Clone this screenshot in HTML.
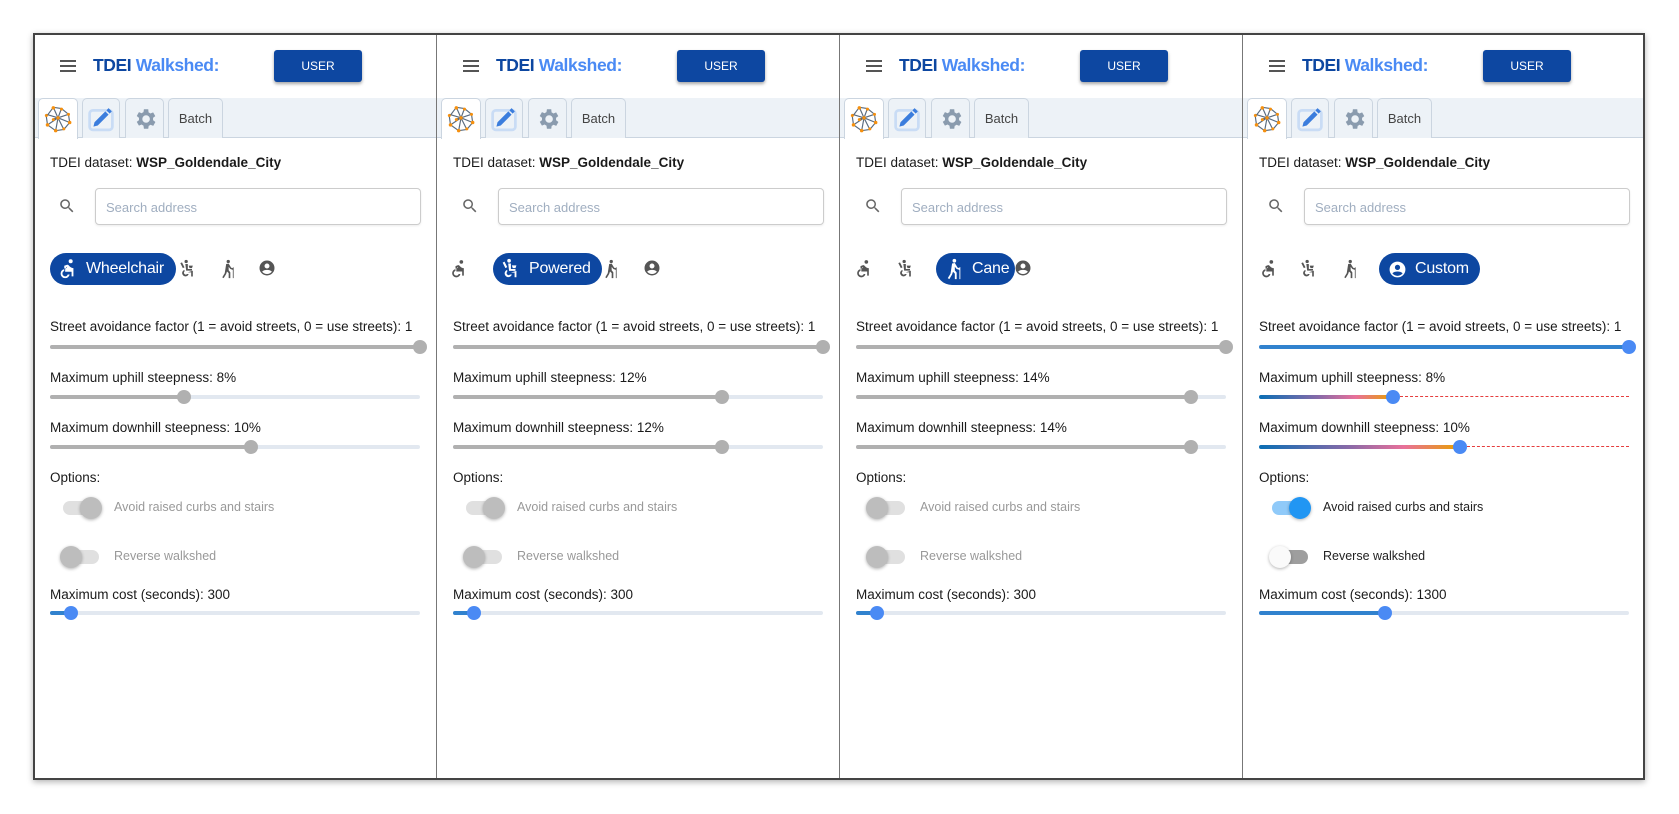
<!DOCTYPE html>
<html><head><meta charset="utf-8"><style>
*{box-sizing:border-box;margin:0;padding:0}
body{width:1679px;height:814px;background:#fff;font-family:"Liberation Sans",sans-serif;position:relative;overflow:hidden;color:#1a1a1a}
.frame{position:absolute;left:33px;top:33px;width:1612px;height:747px;border:2px solid #444;box-shadow:0 2px 6px rgba(0,0,0,.3);z-index:5;pointer-events:none}
.p{position:absolute;top:0;width:403px;height:780px;overflow:hidden}
.div{position:absolute;top:33px;width:1px;height:747px;background:#777;z-index:4}
.a{position:absolute}
.ham{left:27px;top:60px;width:16px;height:12px;border-top:2px solid #555;border-bottom:2px solid #555}
.ham:after{content:"";position:absolute;left:0;top:3px;width:16px;height:2px;background:#555}
.title{left:60px;top:55px;font-size:17.5px;font-weight:bold;width:155px;overflow:hidden;white-space:nowrap;letter-spacing:-.4px}
.title b{color:#0d47a1}.title span{color:#4a8af4;font-weight:bold}
.user{left:241px;top:50px;width:88px;height:32px;background:#0d47a1;color:#fff;font-size:12px;text-align:center;line-height:33px;border-radius:3px;box-shadow:0 2px 3px rgba(0,0,0,.35)}
.tabbar{left:0;top:98px;width:403px;height:40px;background:#edf2f7;border-bottom:1px solid #cbd5e0}
.tab{position:absolute;top:98px;height:40px;border:1px solid #cbd5e0;border-bottom:none;border-radius:5px 5px 0 0;background:#edf2f7;display:flex;align-items:center;justify-content:center;font-size:13px;color:#444}
.tab.on{background:#fff;height:41px}
.ds{left:17px;top:155px;font-size:13.5px}
.ds b{font-weight:bold}
.srch{left:62px;top:188px;width:326px;height:37px;border:1px solid #ccc;border-radius:4px;font-size:13px;color:#a0aec0;padding:11px 0 0 10px;box-shadow:0 1px 2px rgba(0,0,0,.08)}
.pill{position:absolute;top:253px;height:32px;background:#0d47a1;border-radius:16px;color:#fff;font-size:16px;display:flex;align-items:center;padding-left:6px;white-space:nowrap;letter-spacing:-.2px}
.pill svg{margin-right:8px;flex:none}
.ic{position:absolute;top:259px}
.lbl{position:absolute;left:17px;font-size:13.5px;white-space:nowrap}
.tr{position:absolute;left:17px;width:370px;height:4px;border-radius:2px;background:#e2e8f0}
.fill{position:absolute;left:0;top:0;height:4px;border-radius:2px;background:#b0b0b0}
.th{position:absolute;top:-5px;width:14px;height:14px;border-radius:50%;background:#b0b0b0;margin-left:-7px}
.blue .fill{background:#3182ce}.blue .th{background:#4a8af4}
.grad{background:linear-gradient(90deg,#0a6eb4,#8a6aa8 45%,#e8709a 72%,#e8a000)!important}
.dash{position:absolute;top:1px;height:0;border-top:1.5px dashed #e53e3e}
.tg{position:absolute;left:30px;width:36px;height:14px;border-radius:7px;background:#e0e0e0}
.kn{position:absolute;top:-4px;width:22px;height:22px;border-radius:50%;background:#bdbdbd;box-shadow:0 1px 3px rgba(0,0,0,.3)}
.tl{position:absolute;left:81px;font-size:12.5px;color:#999}
</style></head><body>
<svg width="0" height="0" style="position:absolute">
<defs>
<symbol id="wc" viewBox="0 0 24 24"><circle cx="16" cy="3.5" r="2.2"/><path d="M19 13v-2c-1.5 0-3-.6-4-1.7l-1.3-1.4c-.4-.4-1-.6-1.6-.5L9 8.5v3h2v-1.6l1.3-.3L10 12.4V15h7v5h2v-7zM10 20a3 3 0 0 1-3-3c0-1.3.8-2.4 2-2.8V12.1A5 5 0 1 0 14.9 18h-2.1A3 3 0 0 1 10 20z"/></symbol>
<symbol id="pw" viewBox="0 0 24 24"><circle cx="11" cy="3" r="2"/><path d="M6 4l3 6-2 1-3-6zM10 6h3v6h5v2h-7zM14 8h5l-1 3h-3zM19 14v7h-2v-5h-4zM9 13a4 4 0 1 0 5 5h-2a2 2 0 1 1-3-3z"/></symbol>
<symbol id="cn" viewBox="0 0 24 24"><circle cx="13.5" cy="3" r="2"/><path d="M11 6l3-.5 3 5 2 .5v-1h1v13h-1v-10l-3-1-2-2.5 0 4 2 2.5v7h-2v-6l-2-2-1 3-3 5-1.7-1 3-5z"/></symbol>
<symbol id="cu" viewBox="0 0 24 24"><path d="M12 2a10 10 0 1 0 0 20 10 10 0 1 0 0-20zm0 4a3.3 3.3 0 1 1 0 6.6A3.3 3.3 0 0 1 12 6zm0 14c-2.6 0-5-1.2-6.5-3.2 1.5-1.6 4-2.3 6.5-2.3s5 .7 6.5 2.3C17 18.8 14.6 20 12 20z"/></symbol>
<symbol id="net" viewBox="0 0 24 24"><g stroke="#5a6b7e" stroke-width="1" fill="none"><path d="M8 2l7 1 6 5 1 7-5 6-7 1-7-5-1-7zM8 2l4 9 3-8M12 11l9-3M12 11l10 4M12 11l5 10M12 11l-2 11M12 11l-9 6M12 11L2 8M8 12l4-1"/></g><g fill="#f5900f"><circle cx="8" cy="2.5" r="1.5"/><circle cx="15" cy="3.5" r="1.3"/><circle cx="21" cy="8" r="1.3"/><circle cx="22" cy="15" r="1.5"/><circle cx="17" cy="20.5" r="1.3"/><circle cx="10" cy="22" r="1.5"/><circle cx="3" cy="17" r="1.5"/><circle cx="2" cy="9" r="1.3"/><circle cx="12" cy="11" r="1.5"/><circle cx="8" cy="12.5" r="1.3"/></g></symbol>
<symbol id="pen" viewBox="0 0 24 24"><rect x="1.5" y="4" width="21" height="18" rx="3" fill="none" stroke="#c9dcf5" stroke-width="2.5"/><path d="M5 19l1-4 10-10 3 3-10 10z M17 4l2-2 3 3-2 2z" fill="#3b7ddd"/></symbol>
<symbol id="gear" viewBox="0 0 24 24"><path fill="#8a9bae" d="M19.4 13a7.6 7.6 0 0 0 0-2l2.1-1.6-2-3.5-2.5 1a7.5 7.5 0 0 0-1.7-1L15 3h-4l-.4 2.7c-.6.3-1.2.6-1.700 1l-2.5-1-2 3.5L6.5 11a7.6 7.6 0 0 0 0 2l-2.1 1.6 2 3.5 2.5-1c.5.4 1.1.8 1.7 1L11 21h4l.4-2.7c.6-.3 1.2-.6 1.7-1l2.5 1 2-3.5zM13 15.5a3.5 3.5 0 1 1 0-7 3.5 3.5 0 0 1 0 7z"/></symbol>
<symbol id="mag" viewBox="0 0 24 24"><path fill="#666" d="M15.5 14h-.8l-.3-.3A6.5 6.5 0 1 0 9.5 16a6.5 6.5 0 0 0 4.2-1.6l.3.3v.8l5 5 1.5-1.5zm-6 0a4.5 4.5 0 1 1 0-9 4.5 4.5 0 0 1 0 9z"/></symbol>
</defs></svg>
<div class="frame"></div>
<div class="div" style="left:436px"></div><div class="div" style="left:839px"></div><div class="div" style="left:1242px"></div>

<!-- PANEL 1 -->
<div class="p" style="left:33px">
<div class="a ham"></div><div class="a title"><b>TDEI</b> <span>Walkshed:</span></div><div class="a user">USER</div>
<div class="a tabbar"></div>
<div class="tab on" style="left:5px;width:40px"><svg width="28" height="28"><use href="#net"/></svg></div>
<div class="tab" style="left:49px;width:38px"><svg width="28" height="26"><use href="#pen"/></svg></div>
<div class="tab" style="left:92px;width:39px"><svg width="26" height="26"><use href="#gear"/></svg></div>
<div class="tab" style="left:135px;width:55px">Batch</div>
<div class="a ds">TDEI dataset: <b>WSP_Goldendale_City</b></div>
<svg class="a" style="left:25px;top:197px" width="18" height="18"><use href="#mag"/></svg>
<div class="a srch">Search address</div>
<div class="pill" style="left:17px;width:126px"><svg width="22" height="22" fill="#fff"><use href="#wc"/></svg>Wheelchair</div>
<svg class="ic" style="left:144px" width="20" height="20" fill="#555"><use href="#pw"/></svg>
<svg class="ic" style="left:184px" width="20" height="20" fill="#555"><use href="#cn"/></svg>
<svg class="ic" style="left:225px" width="18" height="18" fill="#555"><use href="#cu"/></svg>
<div class="lbl" style="top:319px">Street avoidance factor (1 = avoid streets, 0 = use streets): 1</div>
<div class="tr" style="top:345px"><div class="fill" style="width:370px"></div><div class="th" style="left:370px"></div></div>
<div class="lbl" style="top:370px">Maximum uphill steepness: 8%</div>
<div class="tr" style="top:395px"><div class="fill" style="width:134px"></div><div class="th" style="left:134px"></div></div>
<div class="lbl" style="top:420px">Maximum downhill steepness: 10%</div>
<div class="tr" style="top:445px"><div class="fill" style="width:201px"></div><div class="th" style="left:201px"></div></div>
<div class="lbl" style="top:470px">Options:</div>
<div class="tg" style="top:501px"><div class="kn" style="left:17px"></div></div><div class="tl" style="top:500px">Avoid raised curbs and stairs</div>
<div class="tg" style="top:550px"><div class="kn" style="left:-3px"></div></div><div class="tl" style="top:549px">Reverse walkshed</div>
<div class="lbl" style="top:587px">Maximum cost (seconds): 300</div>
<div class="tr blue" style="top:611px"><div class="fill" style="width:21px"></div><div class="th" style="left:21px"></div></div>
</div>

<!-- PANEL 2 -->
<div class="p" style="left:436px">
<div class="a ham"></div><div class="a title"><b>TDEI</b> <span>Walkshed:</span></div><div class="a user">USER</div>
<div class="a tabbar"></div>
<div class="tab on" style="left:5px;width:40px"><svg width="28" height="28"><use href="#net"/></svg></div>
<div class="tab" style="left:49px;width:38px"><svg width="28" height="26"><use href="#pen"/></svg></div>
<div class="tab" style="left:92px;width:39px"><svg width="26" height="26"><use href="#gear"/></svg></div>
<div class="tab" style="left:135px;width:55px">Batch</div>
<div class="a ds">TDEI dataset: <b>WSP_Goldendale_City</b></div>
<svg class="a" style="left:25px;top:197px" width="18" height="18"><use href="#mag"/></svg>
<div class="a srch">Search address</div>
<svg class="ic" style="left:12px" width="20" height="20" fill="#555"><use href="#wc"/></svg>
<div class="pill" style="left:57px;width:109px"><svg width="22" height="22" fill="#fff"><use href="#pw"/></svg>Powered</div>
<svg class="ic" style="left:164px" width="20" height="20" fill="#555"><use href="#cn"/></svg>
<svg class="ic" style="left:207px" width="18" height="18" fill="#555"><use href="#cu"/></svg>
<div class="lbl" style="top:319px">Street avoidance factor (1 = avoid streets, 0 = use streets): 1</div>
<div class="tr" style="top:345px"><div class="fill" style="width:370px"></div><div class="th" style="left:370px"></div></div>
<div class="lbl" style="top:370px">Maximum uphill steepness: 12%</div>
<div class="tr" style="top:395px"><div class="fill" style="width:269px"></div><div class="th" style="left:269px"></div></div>
<div class="lbl" style="top:420px">Maximum downhill steepness: 12%</div>
<div class="tr" style="top:445px"><div class="fill" style="width:269px"></div><div class="th" style="left:269px"></div></div>
<div class="lbl" style="top:470px">Options:</div>
<div class="tg" style="top:501px"><div class="kn" style="left:17px"></div></div><div class="tl" style="top:500px">Avoid raised curbs and stairs</div>
<div class="tg" style="top:550px"><div class="kn" style="left:-3px"></div></div><div class="tl" style="top:549px">Reverse walkshed</div>
<div class="lbl" style="top:587px">Maximum cost (seconds): 300</div>
<div class="tr blue" style="top:611px"><div class="fill" style="width:21px"></div><div class="th" style="left:21px"></div></div>
</div>

<!-- PANEL 3 -->
<div class="p" style="left:839px">
<div class="a ham"></div><div class="a title"><b>TDEI</b> <span>Walkshed:</span></div><div class="a user">USER</div>
<div class="a tabbar"></div>
<div class="tab on" style="left:5px;width:40px"><svg width="28" height="28"><use href="#net"/></svg></div>
<div class="tab" style="left:49px;width:38px"><svg width="28" height="26"><use href="#pen"/></svg></div>
<div class="tab" style="left:92px;width:39px"><svg width="26" height="26"><use href="#gear"/></svg></div>
<div class="tab" style="left:135px;width:55px">Batch</div>
<div class="a ds">TDEI dataset: <b>WSP_Goldendale_City</b></div>
<svg class="a" style="left:25px;top:197px" width="18" height="18"><use href="#mag"/></svg>
<div class="a srch">Search address</div>
<svg class="ic" style="left:14px" width="20" height="20" fill="#555"><use href="#wc"/></svg>
<svg class="ic" style="left:56px" width="20" height="20" fill="#555"><use href="#pw"/></svg>
<div class="pill" style="left:97px;width:79px"><svg width="22" height="22" fill="#fff"><use href="#cn"/></svg>Cane</div>
<svg class="ic" style="left:175px" width="18" height="18" fill="#555"><use href="#cu"/></svg>
<div class="lbl" style="top:319px">Street avoidance factor (1 = avoid streets, 0 = use streets): 1</div>
<div class="tr" style="top:345px"><div class="fill" style="width:370px"></div><div class="th" style="left:370px"></div></div>
<div class="lbl" style="top:370px">Maximum uphill steepness: 14%</div>
<div class="tr" style="top:395px"><div class="fill" style="width:335px"></div><div class="th" style="left:335px"></div></div>
<div class="lbl" style="top:420px">Maximum downhill steepness: 14%</div>
<div class="tr" style="top:445px"><div class="fill" style="width:335px"></div><div class="th" style="left:335px"></div></div>
<div class="lbl" style="top:470px">Options:</div>
<div class="tg" style="top:501px"><div class="kn" style="left:-3px"></div></div><div class="tl" style="top:500px">Avoid raised curbs and stairs</div>
<div class="tg" style="top:550px"><div class="kn" style="left:-3px"></div></div><div class="tl" style="top:549px">Reverse walkshed</div>
<div class="lbl" style="top:587px">Maximum cost (seconds): 300</div>
<div class="tr blue" style="top:611px"><div class="fill" style="width:21px"></div><div class="th" style="left:21px"></div></div>
</div>

<!-- PANEL 4 -->
<div class="p" style="left:1242px">
<div class="a ham"></div><div class="a title"><b>TDEI</b> <span>Walkshed:</span></div><div class="a user">USER</div>
<div class="a tabbar"></div>
<div class="tab on" style="left:5px;width:40px"><svg width="28" height="28"><use href="#net"/></svg></div>
<div class="tab" style="left:49px;width:38px"><svg width="28" height="26"><use href="#pen"/></svg></div>
<div class="tab" style="left:92px;width:39px"><svg width="26" height="26"><use href="#gear"/></svg></div>
<div class="tab" style="left:135px;width:55px">Batch</div>
<div class="a ds">TDEI dataset: <b>WSP_Goldendale_City</b></div>
<svg class="a" style="left:25px;top:197px" width="18" height="18"><use href="#mag"/></svg>
<div class="a srch">Search address</div>
<svg class="ic" style="left:16px" width="20" height="20" fill="#555"><use href="#wc"/></svg>
<svg class="ic" style="left:56px" width="20" height="20" fill="#555"><use href="#pw"/></svg>
<svg class="ic" style="left:97px" width="20" height="20" fill="#555"><use href="#cn"/></svg>
<div class="pill" style="left:137px;width:101px;padding-left:9px"><svg width="19" height="19" fill="#fff"><use href="#cu"/></svg>Custom</div>
<div class="lbl" style="top:319px">Street avoidance factor (1 = avoid streets, 0 = use streets): 1</div>
<div class="tr blue" style="top:345px"><div class="fill" style="width:370px"></div><div class="th" style="left:370px"></div></div>
<div class="lbl" style="top:370px">Maximum uphill steepness: 8%</div>
<div class="tr blue" style="top:395px;background:none"><div class="fill grad" style="width:134px"></div><div class="dash" style="left:141px;width:229px"></div><div class="th" style="left:134px"></div></div>
<div class="lbl" style="top:420px">Maximum downhill steepness: 10%</div>
<div class="tr blue" style="top:445px;background:none"><div class="fill grad" style="width:201px"></div><div class="dash" style="left:208px;width:162px"></div><div class="th" style="left:201px"></div></div>
<div class="lbl" style="top:470px">Options:</div>
<div class="tg" style="top:501px;background:#90caf9"><div class="kn" style="left:17px;background:#2196f3"></div></div><div class="tl" style="top:500px;color:#222">Avoid raised curbs and stairs</div>
<div class="tg" style="top:550px;background:#9e9e9e"><div class="kn" style="left:-3px;background:#fafafa"></div></div><div class="tl" style="top:549px;color:#222">Reverse walkshed</div>
<div class="lbl" style="top:587px">Maximum cost (seconds): 1300</div>
<div class="tr blue" style="top:611px"><div class="fill" style="width:126px"></div><div class="th" style="left:126px"></div></div>
</div>
</body></html>
